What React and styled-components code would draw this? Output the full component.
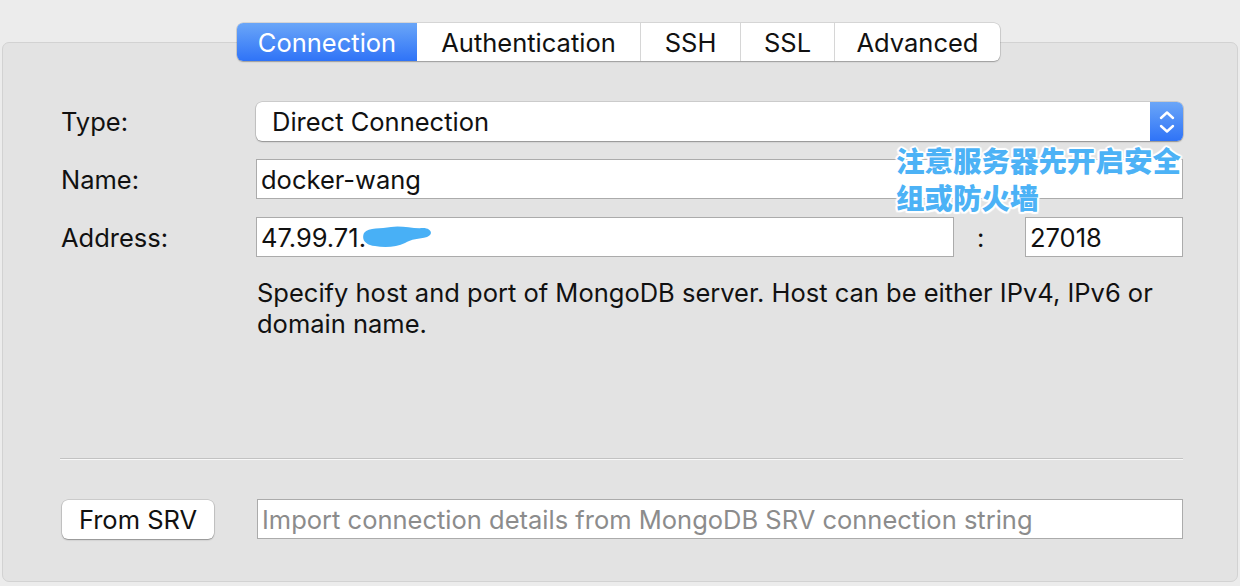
import React from "react";
import styled, { createGlobalStyle } from "styled-components";

const Global = createGlobalStyle`
  html, body { margin: 0; padding: 0; background: #ececec; }
  body { font-family: Inter, "Noto Sans", "Liberation Sans", sans-serif; color: #111; -webkit-font-smoothing: antialiased; }
`;

const Window = styled.div`
  width: 1240px;
  height: 586px;
  padding: 23px 2px 0;
  box-sizing: border-box;
  display: flex;
  flex-direction: column;
  align-items: center;
  position: relative;
`;

const TabBar = styled.div`
  display: flex;
  height: 38px;
  margin-right: 3px;
  border-radius: 6px;
  background: #fff;
  box-shadow: 0 0 0 0.5px rgba(0,0,0,0.18), 0 1px 1.5px rgba(0,0,0,0.25);
  position: relative;
  z-index: 1;
`;

const Tab = styled.div`
  width: ${p => p.$w}px;
  display: flex;
  align-items: center;
  justify-content: center;
  font-size: 25.5px;
  box-sizing: border-box;
  border-left: ${p => (p.$first || p.$afterActive ? "none" : "1px solid #d6d6d6")};
  color: ${p => (p.$active ? "#fff" : "#111")};
  background: ${p => (p.$active ? "linear-gradient(#6aa6f8, #2f73f7)" : "transparent")};
  border-radius: ${p => (p.$first ? "6px 0 0 6px" : p.$last ? "0 6px 6px 0" : "0")};
`;

const Panel = styled.div`
  align-self: stretch;
  margin-top: -19px;
  height: 540px;
  box-sizing: border-box;
  background: #e3e3e3;
  border: 1px solid #d2d2d2;
  border-radius: 7px;
  padding: 59px 54px 0 57px;
  display: flex;
  flex-direction: column;
`;

const FormGrid = styled.div`
  display: grid;
  grid-template-columns: 196px 1fr;
  row-gap: 18px;
  align-items: center;
`;

const Label = styled.div`
  font-size: 25.5px;
  padding-left: 1px;
`;

const Select = styled.div`
  height: 39px;
  background: #fff;
  border-radius: 6px;
  box-shadow: 0 0 0 0.5px rgba(0,0,0,0.2), 0 1px 1.5px rgba(0,0,0,0.3);
  display: flex;
  align-items: center;
  overflow: hidden;
`;

const SelectText = styled.div`
  flex: 1;
  font-size: 25.5px;
  padding-left: 16px;
`;

const Stepper = styled.div`
  width: 33px;
  height: 100%;
  background: linear-gradient(#6aa6f8, #2f73f7);
  display: flex;
  align-items: center;
  justify-content: center;
`;

const Input = styled.div`
  height: 40px;
  box-sizing: border-box;
  background: #fff;
  border: 1px solid #ababab;
  font-size: 25.5px;
  display: flex;
  align-items: center;
  padding-left: 4px;
  position: relative;
  white-space: nowrap;
  width: ${p => (p.$w ? `${p.$w}px` : "auto")};
  flex: ${p => (p.$w ? "none" : "1")};
  color: ${p => (p.$placeholder ? "#8c8c8c" : "#111")};
`;

const AddressRow = styled.div`
  display: flex;
  align-items: center;
`;

const Colon = styled.div`
  width: 71px;
  box-sizing: border-box;
  padding-left: 23px;
  font-size: 25.5px;
`;

const Help = styled.div`
  grid-column: 2;
  font-size: 25.5px;
  line-height: 31px;
  margin-top: 2px;
  padding-left: 1px;
`;

const Separator = styled.div`
  margin-top: 119px;
  height: 1px;
  background: #c2c2c2;
  border-bottom: 1px solid #f8f8f8;
`;

const SrvRow = styled.div`
  margin-top: 39px;
  display: flex;
  align-items: center;
  gap: 43px;
`;

const Button = styled.div`
  width: 152px;
  height: 39px;
  margin-left: 2px;
  background: #fff;
  border-radius: 6px;
  box-shadow: 0 0 0 0.5px rgba(0,0,0,0.2), 0 1px 1.5px rgba(0,0,0,0.3);
  display: flex;
  align-items: center;
  justify-content: center;
  font-size: 25.5px;
`;

const Blob = styled.svg`
  position: absolute;
  left: 104px;
  top: 6px;
`;

const Annotation = styled.div`
  position: absolute;
  left: 896px;
  top: 141px;
  font-family: "Noto Sans CJK SC", sans-serif;
  font-weight: 900;
  font-size: 28.5px;
  line-height: 37px;
  color: #4cb2f6;
  text-shadow: 2px 0 1px #fff, -2px 0 1px #fff, 0 2px 1px #fff, 0 -2px 1px #fff,
    1.5px 1.5px 1px #fff, -1.5px -1.5px 1px #fff, 1.5px -1.5px 1px #fff, -1.5px 1.5px 1px #fff;
`;

const tabs = [
  { label: "Connection", w: 180 },
  { label: "Authentication", w: 223 },
  { label: "SSH", w: 100 },
  { label: "SSL", w: 94 },
  { label: "Advanced", w: 166 },
];

export default function App() {
  return (
    <>
      <Global />
      <Window>
        <TabBar>
          {tabs.map((t, i) => (
            <Tab
              key={t.label}
              $w={t.w}
              $active={i === 0}
              $first={i === 0}
              $last={i === tabs.length - 1}
              $afterActive={i === 1}
            >
              {t.label}
            </Tab>
          ))}
        </TabBar>
        <Panel>
          <FormGrid>
            <Label>Type:</Label>
            <Select>
              <SelectText>Direct Connection</SelectText>
              <Stepper>
                <svg width="18" height="26" viewBox="0 0 18 26" fill="none" stroke="#fff" strokeWidth="2.4" strokeLinecap="round" strokeLinejoin="round">
                  <path d="M3 9 L9 3.5 L15 9" />
                  <path d="M3 17 L9 22.5 L15 17" />
                </svg>
              </Stepper>
            </Select>
            <Label>Name:</Label>
            <Input>docker-wang</Input>
            <Label>Address:</Label>
            <AddressRow>
              <Input>
                47.99.71.
                <Blob width="72" height="28" viewBox="0 0 72 28">
                  <path d="M3 9 C8 3, 20 5, 30 3 C40 1, 52 5, 62 4 C70 4, 73 10, 66 13 C58 15, 50 15, 44 19 C36 23, 24 24, 14 22 C5 21, 0 16, 3 9 Z" fill="#48b0f6" />
                </Blob>
              </Input>
              <Colon>:</Colon>
              <Input $w={158}>27018</Input>
            </AddressRow>
            <Help>
              Specify host and port of MongoDB server. Host can be either IPv4, IPv6 or
              <br />
              domain name.
            </Help>
          </FormGrid>
          <Separator />
          <SrvRow>
            <Button>From SRV</Button>
            <Input $placeholder>Import connection details from MongoDB SRV connection string</Input>
          </SrvRow>
        </Panel>
        <Annotation>
          注意服务器先开启安全
          <br />
          组或防火墙
        </Annotation>
      </Window>
    </>
  );
}
